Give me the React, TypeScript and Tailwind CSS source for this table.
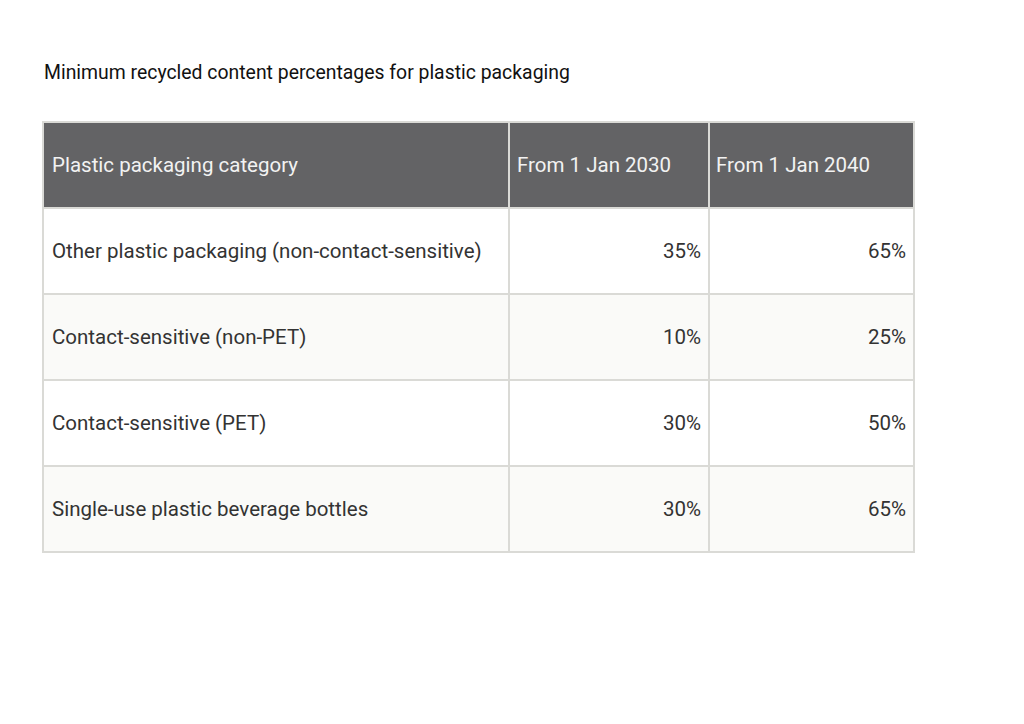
const rows = [
  { category: 'Other plastic packaging (non-contact-sensitive)', y2030: '35%', y2040: '65%' },
  { category: 'Contact-sensitive (non-PET)', y2030: '10%', y2040: '25%' },
  { category: 'Contact-sensitive (PET)', y2030: '30%', y2040: '50%' },
  { category: 'Single-use plastic beverage bottles', y2030: '30%', y2040: '65%' },
]

export default function App() {
  return (
    <div className="min-h-[724px] bg-white px-[42px] pt-[61px] font-['Roboto',sans-serif]">
      <p className="pl-[2px] text-[19.4px] leading-6 text-[#111]">
        Minimum recycled content percentages for plastic packaging
      </p>

      <table className="mt-[36px] w-[871px] table-fixed border-collapse text-[20.5px]">
        <colgroup>
          <col className="w-[466px]" />
          <col className="w-[200px]" />
          <col className="w-[205px]" />
        </colgroup>
        <thead>
          <tr className="h-[86px] bg-[#636365] text-[#f2f2f2]">
            <th className="border-2 border-[#dadad6] px-2 text-left font-normal">
              Plastic packaging category
            </th>
            <th className="border-2 border-[#dadad6] pl-[7px] pr-2 text-left font-normal">From 1 Jan 2030</th>
            <th className="border-2 border-[#dadad6] pl-[6px] pr-2 text-left font-normal">From 1 Jan 2040</th>
          </tr>
        </thead>
        <tbody className="text-[#333]">
          {rows.map((row, i) => (
            <tr key={row.category} className={i % 2 === 0 ? 'h-[86px] bg-white' : 'h-[86px] bg-[#fafaf8]'}>
              <td className="border-2 border-[#dadad6] px-2">{row.category}</td>
              <td className="border-2 border-[#dadad6] pl-2 pr-[7px] text-right">{row.y2030}</td>
              <td className="border-2 border-[#dadad6] pl-2 pr-[7px] text-right">{row.y2040}</td>
            </tr>
          ))}
        </tbody>
      </table>
    </div>
  )
}
